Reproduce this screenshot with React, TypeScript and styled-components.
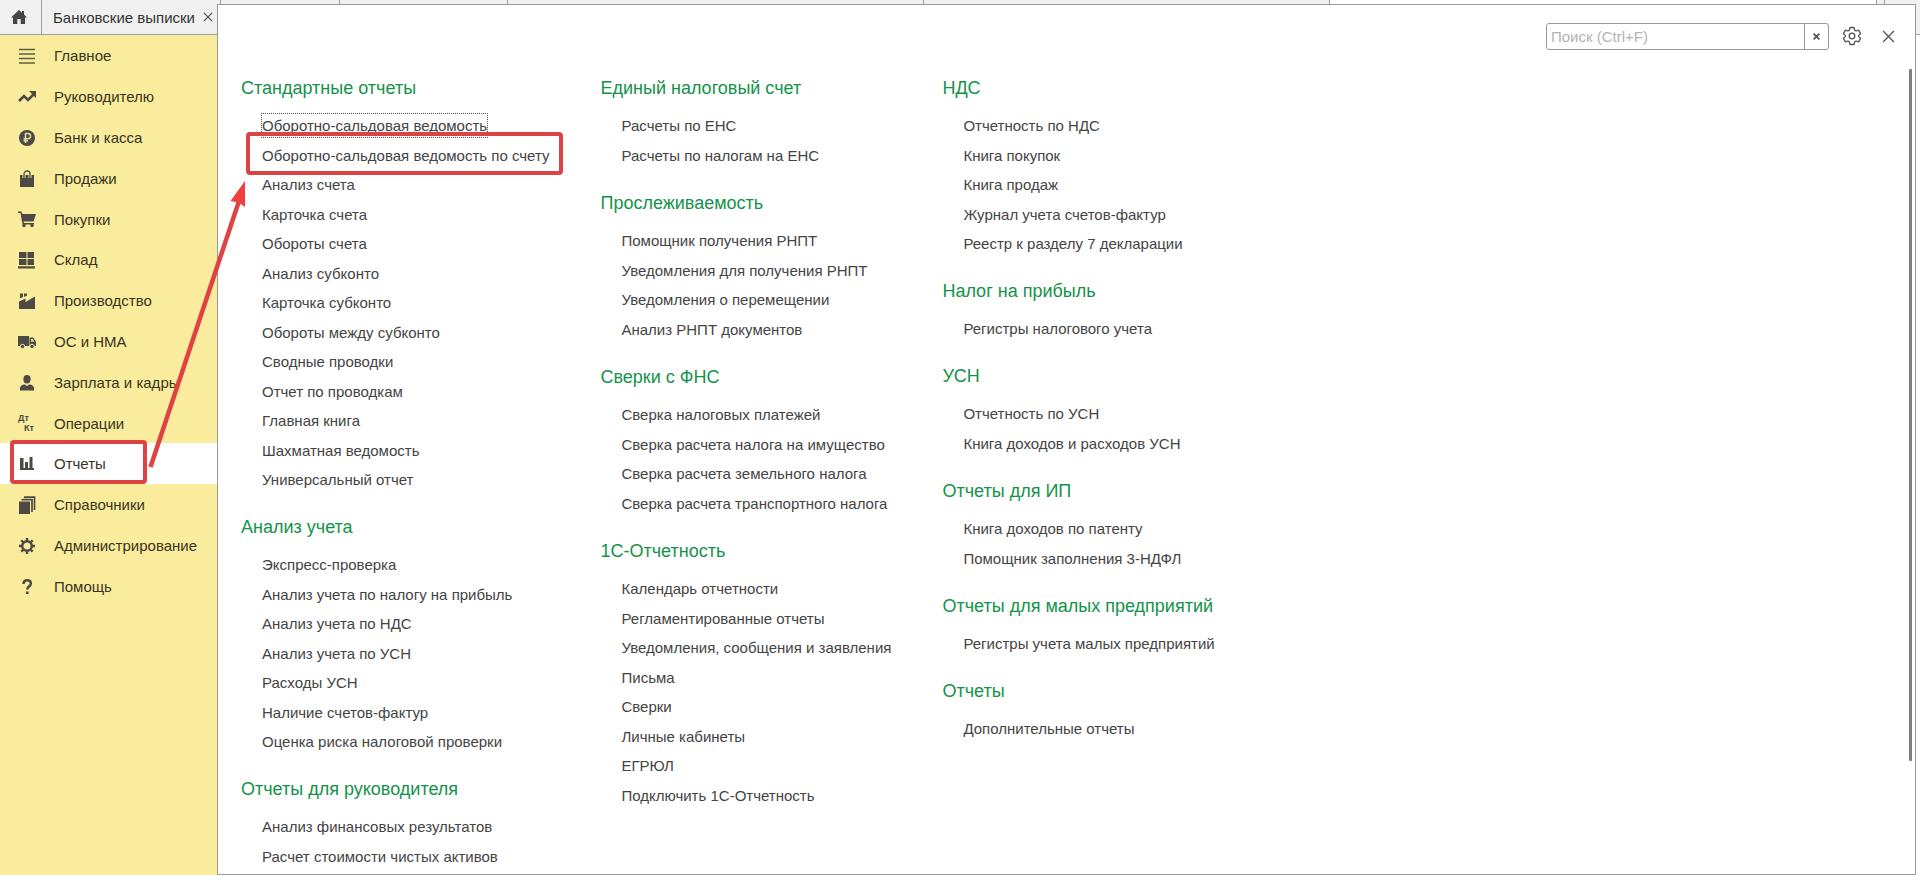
import React from "react";
import styled, { createGlobalStyle, css } from "styled-components";

const GlobalStyle = createGlobalStyle`
  *, *::before, *::after { box-sizing: border-box; }
  body {
    margin: 0;
    background: #fff;
    color: #444;
    font-family: "Liberation Sans", Arial, sans-serif;
    font-size: 15px;
  }
  button, input { font: inherit; color: inherit; }
`;

const Shell = styled.div`
  position: relative;
  display: grid;
  grid-template-columns: 217px minmax(0, 1fr) 4px;
  grid-template-rows: 4px 31px minmax(0, 1fr);
  height: 100vh;
  overflow: hidden;
`;

const TabBar = styled.header`
  grid-column: 1 / -1;
  grid-row: 1 / 3;
  display: flex;
  background: #f0f0f0;
  border-bottom: 1px solid #a0a0a0;
`;

const HomeButton = styled.button`
  display: flex;
  align-items: center;
  justify-content: center;
  width: 42px;
  padding: 0 3px 0 0;
  border: 0;
  border-right: 1px solid #a0a0a0;
  background: none;
`;

const Tab = styled.div<{ $width: number; $current?: boolean }>`
  display: flex;
  flex: none;
  align-items: center;
  width: ${(p) => p.$width}px;
  border-right: 1px solid #a0a0a0;
  background: ${(p) => (p.$current ? "#fff" : "none")};
  color: #333;
  white-space: nowrap;
`;

const TabTitle = styled.span`
  padding-left: 11px;
`;

const TabClose = styled.button`
  display: flex;
  margin-left: 8px;
  padding: 0;
  border: 0;
  background: none;
`;

const Sidebar = styled.nav`
  grid-column: 1;
  grid-row: 3;
  background: #faec9d;
`;

const NavList = styled.ul`
  margin: 0;
  padding: 0;
  list-style: none;
`;

const NavItem = styled.li<{ $active?: boolean }>`
  position: relative;
  height: 41px;
  background: ${(p) => (p.$active ? "#fff" : "none")};
  &:nth-child(5n) { height: 40px; }
`;

const NavLink = styled.a`
  display: flex;
  align-items: center;
  gap: 18px;
  height: 100%;
  padding-left: 18px;
  color: #38341f;
  text-decoration: none;
  white-space: nowrap;
`;

const Highlight = styled.span<{ $kind: "nav" | "link" }>`
  position: absolute;
  border: 4px solid #de4343;
  border-radius: 4px;
  pointer-events: none;
  ${(p) =>
    p.$kind === "nav"
      ? css`
          inset: -3px auto 0 10px;
          width: 137px;
        `
      : css`
          inset: -12px -14px -8px -16px;
        `}
`;

const Panel = styled.main`
  grid-column: 2;
  grid-row: 2 / -1;
  display: flex;
  flex-direction: column;
  border: 1px solid #999;
  background: #fff;
`;

const Toolbar = styled.div`
  display: flex;
  flex: none;
  align-items: center;
  justify-content: flex-end;
  height: 64px;
  padding: 0 17px 2px 0;
`;

const SearchBox = styled.form`
  display: flex;
  width: 283px;
  height: 27px;
  border: 1px solid #999;
  border-radius: 3px;
`;

const SearchInput = styled.input`
  flex: 1;
  min-width: 0;
  padding: 0 4px;
  border: 0;
  outline: 0;
  background: none;
  &::placeholder { color: #b3b3b3; opacity: 1; }
`;

const ClearButton = styled.button`
  display: flex;
  align-items: center;
  justify-content: center;
  width: 24px;
  padding: 0;
  border: 0;
  border-left: 1px solid #999;
  background: none;
`;

const ToolButton = styled.button`
  display: flex;
  align-items: center;
  justify-content: center;
  width: 20px;
  height: 20px;
  margin-left: 13px;
  padding: 0;
  border: 0;
  background: none;
  & + & { margin-left: 16px; }
`;

const Scroller = styled.div`
  display: flex;
  flex: 1;
  min-height: 0;
  padding-right: 3px;
`;

const Columns = styled.div`
  display: flex;
  flex: 1;
  align-items: flex-start;
  gap: 51px;
  height: 100%;
  padding: 8px 0 0 23px;
  overflow: hidden;
`;

const Thumb = styled.div`
  width: 3px;
  height: 86%;
  border-radius: 1px;
  background: #808080;
`;

const Column = styled.div`
  display: flex;
  flex: none;
  flex-direction: column;
  gap: 22px;
`;

const Heading = styled.h2`
  margin: 0 0 12px;
  color: #14924a;
  font-size: 18px;
  font-weight: 400;
  line-height: 22px;
  white-space: nowrap;
`;

const Links = styled.ul`
  margin: 0;
  padding: 0 0 0 21px;
  list-style: none;
`;

const LinkRow = styled.li`
  display: flex;
  align-items: center;
  height: 29px;
  &:nth-child(even) { height: 30px; }
`;

const ReportLink = styled.a<{ $focused?: boolean }>`
  position: relative;
  color: #444;
  line-height: 23px;
  text-decoration: none;
  white-space: nowrap;
  outline: ${(p) => (p.$focused ? "1px dotted #555" : "none")};
`;

const Arrow = styled.svg`
  position: absolute;
  top: 0;
  left: 0;
  pointer-events: none;
`;

const Icon = styled.svg`
  display: block;
  flex: none;
`;

const DARK = "#4d4a45";

const icons: Record<string, React.ReactNode> = {
  menu: <path d="M1 2.500h16M1 7h16M1 11.500h16M1 16h16" stroke="#625d43" strokeWidth="1.300" />,
  trend: (
    <>
      <path d="M1 13l5-5 4 4 6-6" fill="none" stroke={DARK} strokeWidth="2.600" />
      <path d="M11 3h7v7z" fill={DARK} />
    </>
  ),
  ruble: (
    <>
      <circle cx="9" cy="9" r="8" fill={DARK} />
      <path d="M7.500 14V4.500H10a2.600 2.600 0 010 5.200H5.500M5.500 11.800H10" fill="none" stroke="#e6dca0" strokeWidth="1.500" />
    </>
  ),
  bag: (
    <>
      <path d="M2 5h14v12H2z" fill={DARK} />
      <path d="M6 8V4a3 3 0 016 0v4" fill="none" stroke="#faec9d" strokeWidth="3" />
      <path d="M6 8V4a3 3 0 016 0v4" fill="none" stroke={DARK} strokeWidth="1.300" />
    </>
  ),
  cart: (
    <>
      <path d="M0 1.500h3.500L4.500 4H18l-2.500 7.500H5.500l.5 1.500h10v1.500H4.500L2.500 3H0z" fill={DARK} />
      <circle cx="6" cy="15.500" r="1.700" fill={DARK} />
      <circle cx="14" cy="15.500" r="1.700" fill={DARK} />
    </>
  ),
  store: <path d="M1 1h7.500v6H1zM9.500 1H16v6H9.500zM1 8h7.500v6H1zM9.500 8H16v6H9.500zM0 15.300h17V17.500H0z" fill={DARK} />,
  factory: <path d="M1 17V9.500l6.500-3V10L17 4.500V17zM2 1.500h3V5L2 6.500zM6 1.500h3v2L6 5z" fill={DARK} />,
  truck: (
    <>
      <path d="M0 3h11v10H0z" fill={DARK} />
      <path d="M11.500 4.500H15l3 4V13h-6.500z" fill={DARK} />
      <path d="M13 6h1.700l1.800 2.800H13z" fill="#e0d48f" />
      <circle cx="4.500" cy="13.500" r="2.200" fill={DARK} stroke="#faec9d" />
      <circle cx="14" cy="13.500" r="2.200" fill={DARK} stroke="#faec9d" />
    </>
  ),
  person: (
    <>
      <ellipse cx="9" cy="5.200" rx="3.600" ry="4.200" fill={DARK} />
      <path d="M2 16.500v-2.500q0-2.500 4-3.500h1l2 1.500 2-1.500h1q4 1 4 3.500v2.500z" fill={DARK} />
    </>
  ),
  ops: (
    <g fill={DARK} fontSize="9" fontWeight="700" fontFamily="Liberation Sans, sans-serif">
      <text x="0" y="7">Дт</text>
      <text x="6" y="17">Кт</text>
    </g>
  ),
  chart: <path d="M2 3h3.500v10H2zM7 7h3v6H7zM11.500 2h3v11h-3zM2 13h14v2H2z" fill={DARK} />,
  books: (
    <>
      <path d="M1 5.500h11V18H1z" fill={DARK} />
      <path d="M3.500 3.700h10.500V16M6 1.200h10.500V14" fill="none" stroke={DARK} strokeWidth="1.700" />
    </>
  ),
  gear: (
    <>
      <circle cx="9" cy="9" r="4.800" fill="none" stroke={DARK} strokeWidth="2.400" />
      <path d="M9 1v3M9 14v3M1 9h3M14 9h3M3.300 3.300l2.200 2.200M12.500 12.500l2.200 2.200M3.300 14.700l2.200-2.200M12.500 5.500l2.200-2.200" stroke={DARK} strokeWidth="2.400" />
    </>
  ),
  help: (
    <>
      <path d="M5.500 6q0-3.800 3.700-3.800T12.800 5.500q0 1.800-1.700 2.900T9.300 11.500" fill="none" stroke={DARK} strokeWidth="2.500" />
      <path d="M8 13.500h2.600V16H8z" fill={DARK} />
    </>
  ),
};

const navItems: [string, string][] = [
  ["menu", "Главное"],
  ["trend", "Руководителю"],
  ["ruble", "Банк и касса"],
  ["bag", "Продажи"],
  ["cart", "Покупки"],
  ["store", "Склад"],
  ["factory", "Производство"],
  ["truck", "ОС и НМА"],
  ["person", "Зарплата и кадры"],
  ["ops", "Операции"],
  ["chart", "Отчеты"],
  ["books", "Справочники"],
  ["gear", "Администрирование"],
  ["help", "Помощь"],
];

const ACTIVE = "Отчеты";
const FOCUSED = "Оборотно-сальдовая ведомость";
const MARKED = "Оборотно-сальдовая ведомость по счету";

const columns: { title: string; links: string[] }[][] = [
  [
    {
      title: "Стандартные отчеты",
      links: [
        FOCUSED,
        MARKED,
        "Анализ счета",
        "Карточка счета",
        "Обороты счета",
        "Анализ субконто",
        "Карточка субконто",
        "Обороты между субконто",
        "Сводные проводки",
        "Отчет по проводкам",
        "Главная книга",
        "Шахматная ведомость",
        "Универсальный отчет",
      ],
    },
    {
      title: "Анализ учета",
      links: [
        "Экспресс-проверка",
        "Анализ учета по налогу на прибыль",
        "Анализ учета по НДС",
        "Анализ учета по УСН",
        "Расходы УСН",
        "Наличие счетов-фактур",
        "Оценка риска налоговой проверки",
      ],
    },
    {
      title: "Отчеты для руководителя",
      links: ["Анализ финансовых результатов", "Расчет стоимости чистых активов"],
    },
  ],
  [
    { title: "Единый налоговый счет", links: ["Расчеты по ЕНС", "Расчеты по налогам на ЕНС"] },
    {
      title: "Прослеживаемость",
      links: [
        "Помощник получения РНПТ",
        "Уведомления для получения РНПТ",
        "Уведомления о перемещении",
        "Анализ РНПТ документов",
      ],
    },
    {
      title: "Сверки с ФНС",
      links: [
        "Сверка налоговых платежей",
        "Сверка расчета налога на имущество",
        "Сверка расчета земельного налога",
        "Сверка расчета транспортного налога",
      ],
    },
    {
      title: "1С-Отчетность",
      links: [
        "Календарь отчетности",
        "Регламентированные отчеты",
        "Уведомления, сообщения и заявления",
        "Письма",
        "Сверки",
        "Личные кабинеты",
        "ЕГРЮЛ",
        "Подключить 1С-Отчетность",
      ],
    },
  ],
  [
    {
      title: "НДС",
      links: [
        "Отчетность по НДС",
        "Книга покупок",
        "Книга продаж",
        "Журнал учета счетов-фактур",
        "Реестр к разделу 7 декларации",
      ],
    },
    { title: "Налог на прибыль", links: ["Регистры налогового учета"] },
    { title: "УСН", links: ["Отчетность по УСН", "Книга доходов и расходов УСН"] },
    { title: "Отчеты для ИП", links: ["Книга доходов по патенту", "Помощник заполнения 3-НДФЛ"] },
    { title: "Отчеты для малых предприятий", links: ["Регистры учета малых предприятий"] },
    { title: "Отчеты", links: ["Дополнительные отчеты"] },
  ],
];

const Cross = ({ size, width }: { size: number; width: number }) => (
  <Icon width={size} height={size} viewBox="0 0 12 12" aria-hidden="true">
    <path d="M1 1l10 10M11 1L1 11" stroke="#555" strokeWidth={width} />
  </Icon>
);

export default function App() {
  return (
    <>
      <GlobalStyle />
      <Shell>
        <TabBar>
          <HomeButton aria-label="Начальная страница">
            <Icon width="16" height="14" viewBox="0 0 16 14" aria-hidden="true">
              <path d="M8 0l3 2.800V1h2v3.600L16 7.500h-2V14H9.700V9H6.300v5H2V7.500H0z" fill="#444" />
            </Icon>
          </HomeButton>
          <Tab $width={179}>
            <TabTitle>Банковские выписки</TabTitle>
            <TabClose aria-label="Закрыть вкладку">
              <Cross size={10} width={1.5} />
            </TabClose>
          </Tab>
          <Tab $width={119} />
          <Tab $width={168} />
          <Tab $width={416} />
          <Tab $width={406} />
          <Tab $width={547} $current />
          <Tab $width={8} />
        </TabBar>

        <Sidebar aria-label="Разделы">
          <NavList>
            {navItems.map(([icon, label]) => (
              <NavItem key={label} $active={label === ACTIVE}>
                <NavLink href="#">
                  <Icon width="18" height="18" viewBox="0 0 18 18" aria-hidden="true">
                    {icons[icon]}
                  </Icon>
                  {label}
                </NavLink>
                {label === ACTIVE && <Highlight $kind="nav" />}
              </NavItem>
            ))}
          </NavList>
        </Sidebar>

        <Panel>
          <Toolbar>
            <SearchBox>
              <SearchInput type="text" aria-label="Поиск" placeholder="Поиск (Ctrl+F)" />
              <ClearButton type="button" aria-label="Очистить">
                <Cross size={7} width={3} />
              </ClearButton>
            </SearchBox>
            <ToolButton aria-label="Настройки">
              <Icon width="20" height="20" viewBox="0 0 20 20" aria-hidden="true">
                <path
                  d="M8 1.500h4l.6 2.600 1.500.9 2.500-.8 2 3.400-1.900 1.800v1.200l1.900 1.800-2 3.400-2.500-.8-1.500.9-.6 2.600H8l-.6-2.600-1.500-.9-2.500.8-2-3.400 1.900-1.800V9.400L1.400 7.600l2-3.400 2.500.8 1.500-.9z"
                  fill="none"
                  stroke="#555"
                  strokeWidth="1.300"
                  strokeLinejoin="round"
                />
                <circle cx="10" cy="10" r="2.800" fill="none" stroke="#555" strokeWidth="1.300" />
              </Icon>
            </ToolButton>
            <ToolButton aria-label="Закрыть">
              <Cross size={13} width={1.2} />
            </ToolButton>
          </Toolbar>
          <Scroller>
            <Columns>
              {columns.map((sections, i) => (
                <Column key={i}>
                  {sections.map(({ title, links }) => (
                    <section key={title}>
                      <Heading>{title}</Heading>
                      <Links>
                        {links.map((link) => (
                          <LinkRow key={link}>
                            <ReportLink href="#" $focused={link === FOCUSED}>
                              {link}
                              {link === MARKED && <Highlight $kind="link" />}
                            </ReportLink>
                          </LinkRow>
                        ))}
                      </Links>
                    </section>
                  ))}
                </Column>
              ))}
            </Columns>
            <Thumb />
          </Scroller>
        </Panel>

        <Arrow width="260" height="480" viewBox="0 0 260 480" aria-hidden="true">
          <path d="M150.500 467L239 201" stroke="#de4343" strokeWidth="4.500" />
          <path d="M245 181L230.500 201l8 1.500 6.500 4.500z" fill="#ef3f3f" />
        </Arrow>
      </Shell>
    </>
  );
}
